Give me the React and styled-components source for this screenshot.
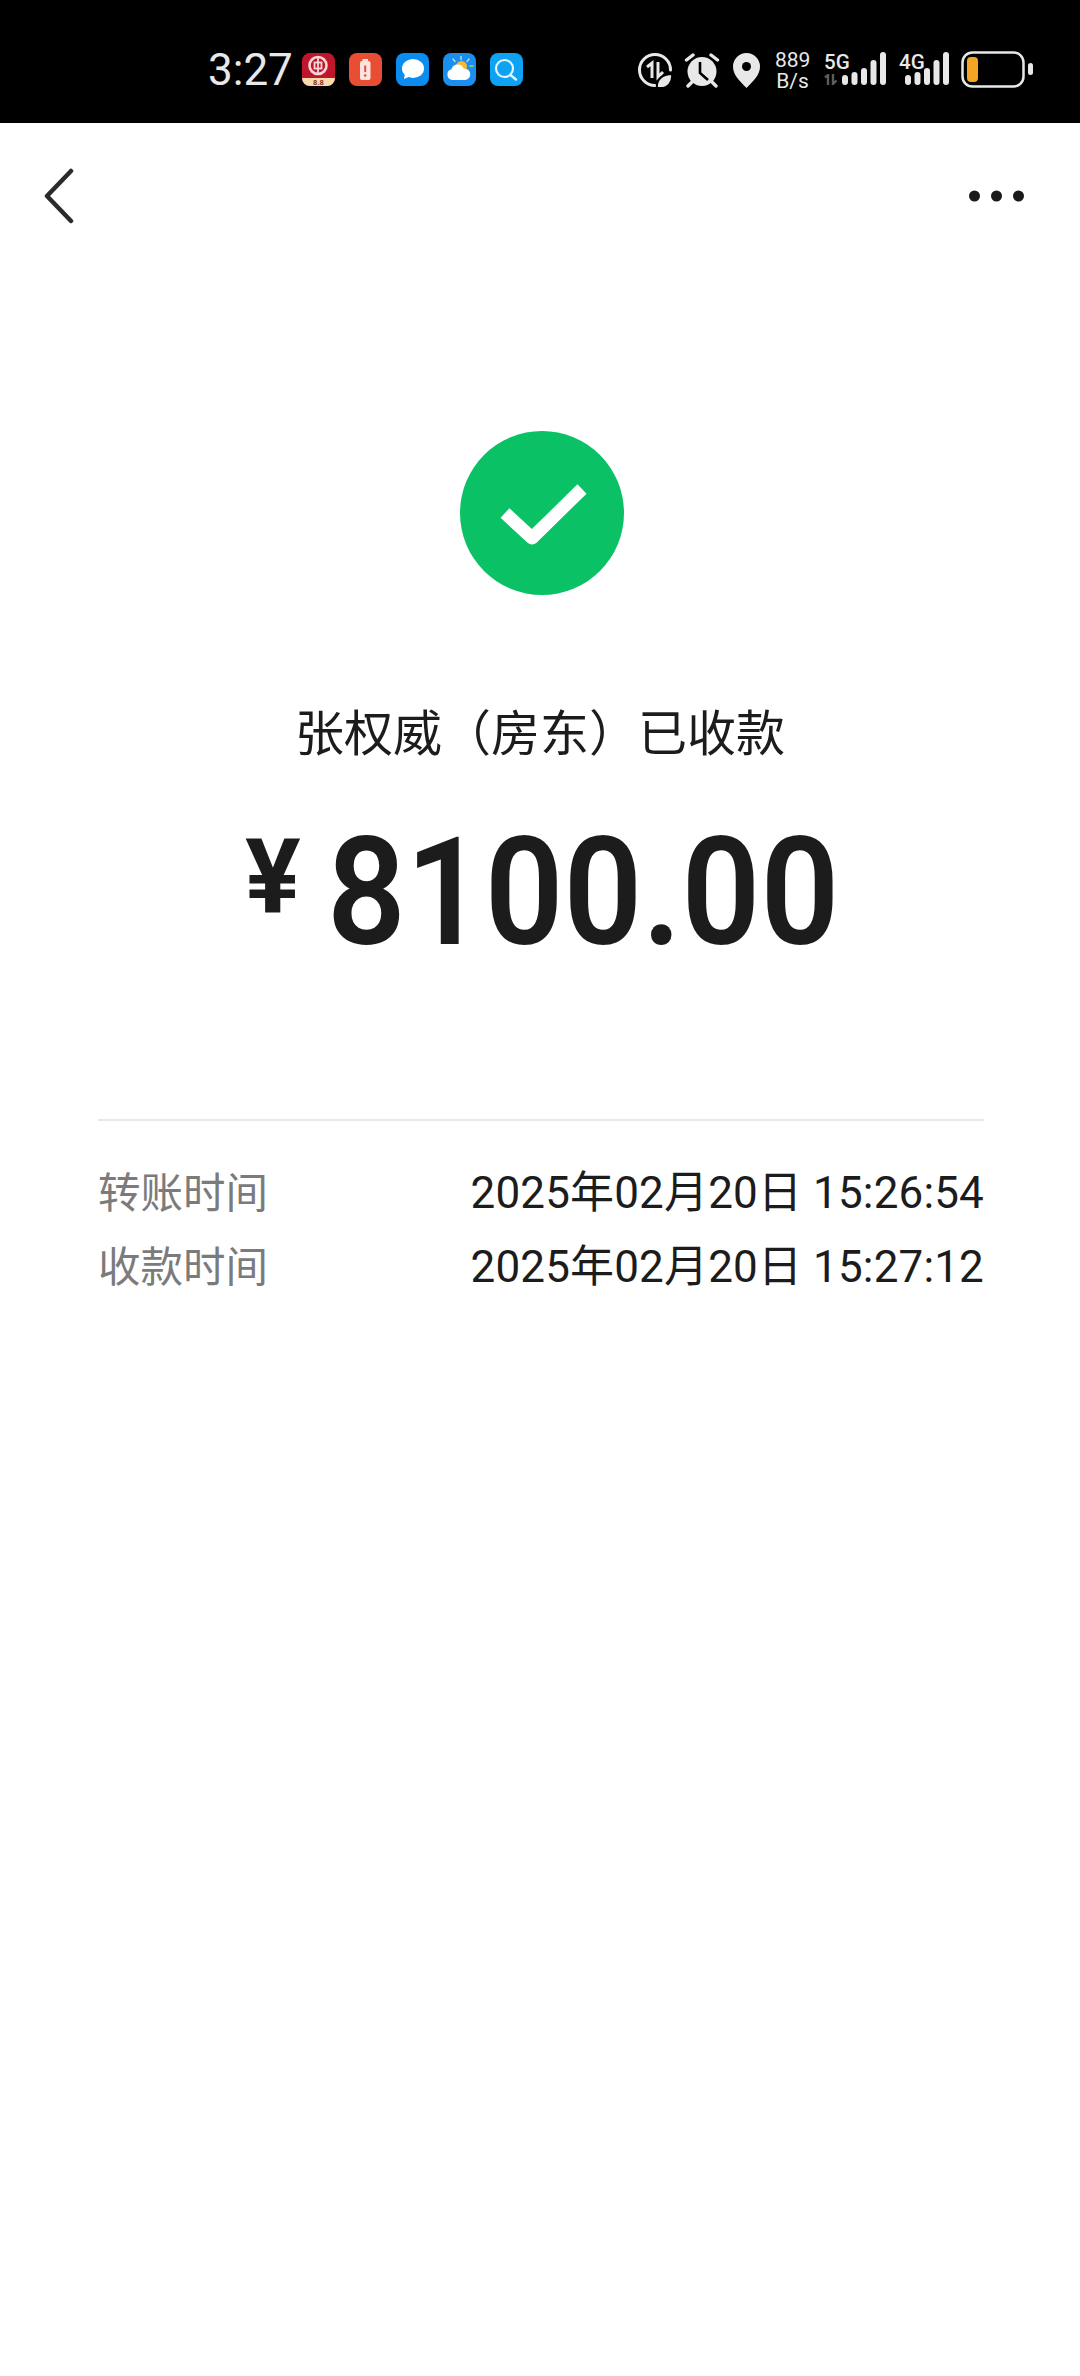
import React from 'react';
import styled, { createGlobalStyle } from 'styled-components';

// Transfer receipt screen: black phone status bar, nav row, result block, time rows

const GlobalStyle = createGlobalStyle`
    html, body {
        margin: 0;
        padding: 0;
        background: #fff;
    }
    * {
        box-sizing: border-box;
    }
    body {
        font-family: Roboto, "Noto Sans CJK SC", sans-serif;
    }
`;

const Page = styled.div`
    width: 1080px;
    height: 2376px;
    background: #fff;
    overflow: hidden;
`;

const StatusBar = styled.div`
    height: 123px;
    background: #000;
    display: flex;
    align-items: center;
    padding: 16px 47px 0 208px;
    color: #e8e8e8;
`;

const Clock = styled.span`
    font-size: 44px;
    line-height: 50px;
    width: 94px;
`;

const AppIcons = styled.div`
    display: flex;
    gap: 14px;
`;

const AppIcon = styled.svg`
    width: 33px;
    height: 33px;
    display: block;
`;

const Indicators = styled.div`
    margin-left: auto;
    display: flex;
    align-items: flex-end;
    height: 37px;
`;

const SysIcon = styled.svg`
    display: block;
    flex: none;
    margin-right: ${(p) => p.$gap || 0}px;
`;

const Speed = styled.div`
    width: 35px;
    margin: 0 14px -4px 15px;
    font-size: 21px;
    line-height: 21px;
    text-align: center;
    white-space: nowrap;
    color: #e8e8e8;
`;

const Network = styled.div`
    display: flex;
    align-items: stretch;
    height: 33px;
    margin-bottom: 3px;
    margin-right: ${(p) => p.$gap}px;
`;

const NetworkText = styled.div`
    width: ${(p) => p.$w}px;
    display: flex;
    flex-direction: column;
    justify-content: space-between;
`;

const NetworkLabel = styled.span`
    font-size: 21px;
    line-height: 21px;
    font-weight: 500;
    white-space: nowrap;
    transform: scaleX(0.98);
    transform-origin: left center;
`;

const NavBar = styled.div`
    height: 146px;
    display: flex;
    align-items: center;
    justify-content: space-between;
    padding: 0 56px 0 43px;
`;

const Result = styled.div`
    display: flex;
    flex-direction: column;
    align-items: center;
    padding-top: 162px;
`;

const SuccessIcon = styled.svg`
    width: 164px;
    height: 164px;
    display: block;
    margin-left: 4px;
`;

const Title = styled.div`
    margin-top: 110px;
    font-size: 49px;
    line-height: 60px;
    color: #1c1c1c;
    white-space: nowrap;
`;

const Amount = styled.div`
    margin-top: 53px;
    height: 150px;
    padding-right: 8px;
    display: flex;
    align-items: flex-start;
    color: #1c1c1c;
`;

const Currency = styled.span`
    font-size: 104px;
    line-height: 118px;
    font-weight: 700;
    margin-right: 30px;
    width: 52px;
`;

const Digits = styled.span`
    font-size: 150px;
    line-height: 150px;
    font-weight: 600;
    width: 500px;
    white-space: nowrap;
    transform: scaleX(0.92);
    transform-origin: left center;
`;

const Details = styled.div`
    margin: 151px 96px 0 98px;
    border-top: 2px solid #e8e8e8;
    padding-top: 31px;
    display: flex;
    flex-direction: column;
`;

const DetailRow = styled.div`
    height: 74px;
    display: flex;
    align-items: center;
    justify-content: space-between;
`;

const DetailLabel = styled.span`
    font-size: 42.500px;
    color: #7b7b7b;
`;

const DetailValue = styled.span`
    font-size: 44px;
    letter-spacing: 0.15px;
    color: #1c1c1c;
    white-space: nowrap;
`;

const rows = [
    { label: '转账时间', value: '2025年02月20日 15:26:54' },
    { label: '收款时间', value: '2025年02月20日 15:27:12' },
];

function SignalBars() {
    return (
        <SysIcon width="44" height="33" viewBox="0 0 44 33">
            <rect x="0" y="23" width="6" height="10" rx="3" fill="#e8e8e8" />
            <rect x="9.500" y="20" width="6" height="13" rx="3" fill="#e8e8e8" />
            <rect x="19" y="16" width="6" height="17" rx="3" fill="#e8e8e8" />
            <rect x="28.500" y="8" width="6" height="25" rx="3" fill="#e8e8e8" />
            <rect x="38" y="0" width="6" height="33" rx="3" fill="#e8e8e8" />
        </SysIcon>
    );
}

function App() {
    return (
        <Page>
            <GlobalStyle />
            <StatusBar>
                <Clock>3:27</Clock>
                <AppIcons>
                    <AppIcon viewBox="0 0 33 33">
                        <rect width="33" height="33" rx="8" fill="#c0162c" />
                        <path d="M0 25h33v0a8 8 0 0 1-8 8H8a8 8 0 0 1-8-8z" fill="#f8dcae" />
                        <circle cx="16" cy="12.500" r="8.500" fill="none" stroke="#f6d6d6" strokeWidth="2.600" />
                        <rect x="12.500" y="9.500" width="7" height="6" fill="none" stroke="#f6d6d6" strokeWidth="1.800" />
                        <path d="M16 3v19" stroke="#f6d6d6" strokeWidth="1.800" />
                        <text x="16.500" y="31.500" fontSize="7.500" fontWeight="700" textAnchor="middle" fill="#8c2a20">8.8</text>
                    </AppIcon>
                    <AppIcon viewBox="0 0 33 33">
                        <rect width="33" height="33" rx="8" fill="#e94e34" />
                        <rect x="11" y="8" width="10.500" height="19" rx="2" fill="#fbe4df" />
                        <rect x="13.500" y="6" width="5.500" height="3" fill="#fbe4df" />
                        <path d="M16.200 12.500v6.500" stroke="#e94e34" strokeWidth="2" />
                        <circle cx="16.200" cy="22.500" r="1.300" fill="#e94e34" />
                    </AppIcon>
                    <AppIcon viewBox="0 0 33 33">
                        <rect width="33" height="33" rx="8" fill="#0a8cf0" />
                        <ellipse cx="17" cy="15.500" rx="11" ry="9.500" fill="#fff" />
                        <path d="M9 20l-1 6 7-3z" fill="#fff" />
                    </AppIcon>
                    <AppIcon viewBox="0 0 33 33">
                        <rect width="33" height="33" rx="8" fill="#1a8ff0" />
                        <path d="M18 3.500v3M10 6l2 2.500M26 6l-2 2.500" stroke="#bfe0d0" strokeWidth="1.400" strokeLinecap="round" />
                        <path d="M27 13h3" stroke="#a8d86a" strokeWidth="1.600" strokeLinecap="round" />
                        <circle cx="18.500" cy="13.500" r="5.500" fill="#f7b733" />
                        <path d="M9.500 27a5.500 5.500 0 0 1-1-10.800 6.500 6.500 0 0 1 12.400-.5 5.700 5.700 0 0 1 1.500 11.300z" fill="#fff" />
                    </AppIcon>
                    <AppIcon viewBox="0 0 33 33">
                        <rect width="33" height="33" rx="8" fill="#0ea2f5" />
                        <circle cx="14.500" cy="15.500" r="8.500" fill="none" stroke="#e6f6ff" strokeWidth="2.200" />
                        <path d="M20.500 22l5.500 4.500" stroke="#e6f6ff" strokeWidth="2.400" strokeLinecap="round" />
                    </AppIcon>
                </AppIcons>
                <Indicators>
                    <SysIcon width="34" height="35" viewBox="0 0 34 35" $gap={12}>
                        <path d="M17 32.500A15.500 15.500 0 1 1 32.500 17" fill="none" stroke="#e8e8e8" strokeWidth="3" strokeLinecap="round" />
                        <path d="M9 14l5-4v15M20 9v15l5-5" fill="none" stroke="#e8e8e8" strokeWidth="3" />
                        <path d="M19 35c-1-8 5-14 15-14 1 8-4 14-11 14z" fill="#e8e8e8" stroke="#000" strokeWidth="2" />
                    </SysIcon>
                    <SysIcon width="36" height="36" viewBox="0 0 36 36" $gap={13}>
                        <circle cx="18" cy="19.500" r="14.500" fill="#e8e8e8" />
                        <path d="M16 10v11l8 7" fill="none" stroke="#000" strokeWidth="2.600" />
                        <path d="M2.500 8L9 3M33.500 8L27 3M4 34l4-4M32 34l-4-4" stroke="#e8e8e8" strokeWidth="3.400" strokeLinecap="round" />
                    </SysIcon>
                    <SysIcon width="27" height="35" viewBox="0 0 27 35">
                        <path d="M13.500 35C6 27 0 22 0 13.500a13.500 13.500 0 0 1 27 0C27 22 21 27 13.500 35z" fill="#e8e8e8" />
                        <circle cx="13.500" cy="13.500" r="4.500" fill="#000" />
                    </SysIcon>
                    <Speed>889<br />B/s</Speed>
                    <Network $gap={13}>
                        <NetworkText $w={18}>
                            <NetworkLabel>5G</NetworkLabel>
                            <svg width="14" height="11" viewBox="0 0 14 11">
                                <path d="M1 3.500l3-2.500v10M9 0v10l3.500-3.500" fill="none" stroke="#5c5c5c" strokeWidth="2.400" />
                            </svg>
                        </NetworkText>
                        <SignalBars />
                    </Network>
                    <Network $gap={12}>
                        <NetworkText $w={6}>
                            <NetworkLabel>4G</NetworkLabel>
                        </NetworkText>
                        <SignalBars />
                    </Network>
                    <SysIcon width="72" height="37" viewBox="0 0 72 37">
                        <rect x="1.500" y="1.500" width="61" height="34" rx="10" fill="none" stroke="#e8e8e8" strokeWidth="2.500" />
                        <rect x="6" y="6" width="11" height="25" rx="4" fill="#f5a524" />
                        <rect x="67" y="12" width="5" height="12" rx="2.500" fill="#e8e8e8" />
                    </SysIcon>
                </Indicators>
            </StatusBar>
            <NavBar>
                <svg width="32" height="56" viewBox="0 0 32 56">
                    <path d="M28 3L4 28l24 25" fill="none" stroke="#2b2b2b" strokeWidth="4.500" strokeLinecap="round" strokeLinejoin="round" />
                </svg>
                <svg width="55" height="12" viewBox="0 0 55 12">
                    <circle cx="5.500" cy="6" r="5.500" fill="#1a1a1a" />
                    <circle cx="27.500" cy="6" r="5.500" fill="#1a1a1a" />
                    <circle cx="49.500" cy="6" r="5.500" fill="#1a1a1a" />
                </svg>
            </NavBar>
            <Result>
                <SuccessIcon viewBox="0 0 164 164">
                    <circle cx="82" cy="82" r="82" fill="#0ac165" />
                    <path d="M45 82l27 25 50-49" fill="none" stroke="#fff" strokeWidth="13" strokeLinejoin="round" />
                </SuccessIcon>
                <Title>张权威（房东）已收款</Title>
                <Amount>
                    <Currency>¥</Currency>
                    <Digits>8100.00</Digits>
                </Amount>
            </Result>
            <Details>
                {rows.map((row) => (
                    <DetailRow key={row.label}>
                        <DetailLabel>{row.label}</DetailLabel>
                        <DetailValue>{row.value}</DetailValue>
                    </DetailRow>
                ))}
            </Details>
        </Page>
    );
}

export default App;
